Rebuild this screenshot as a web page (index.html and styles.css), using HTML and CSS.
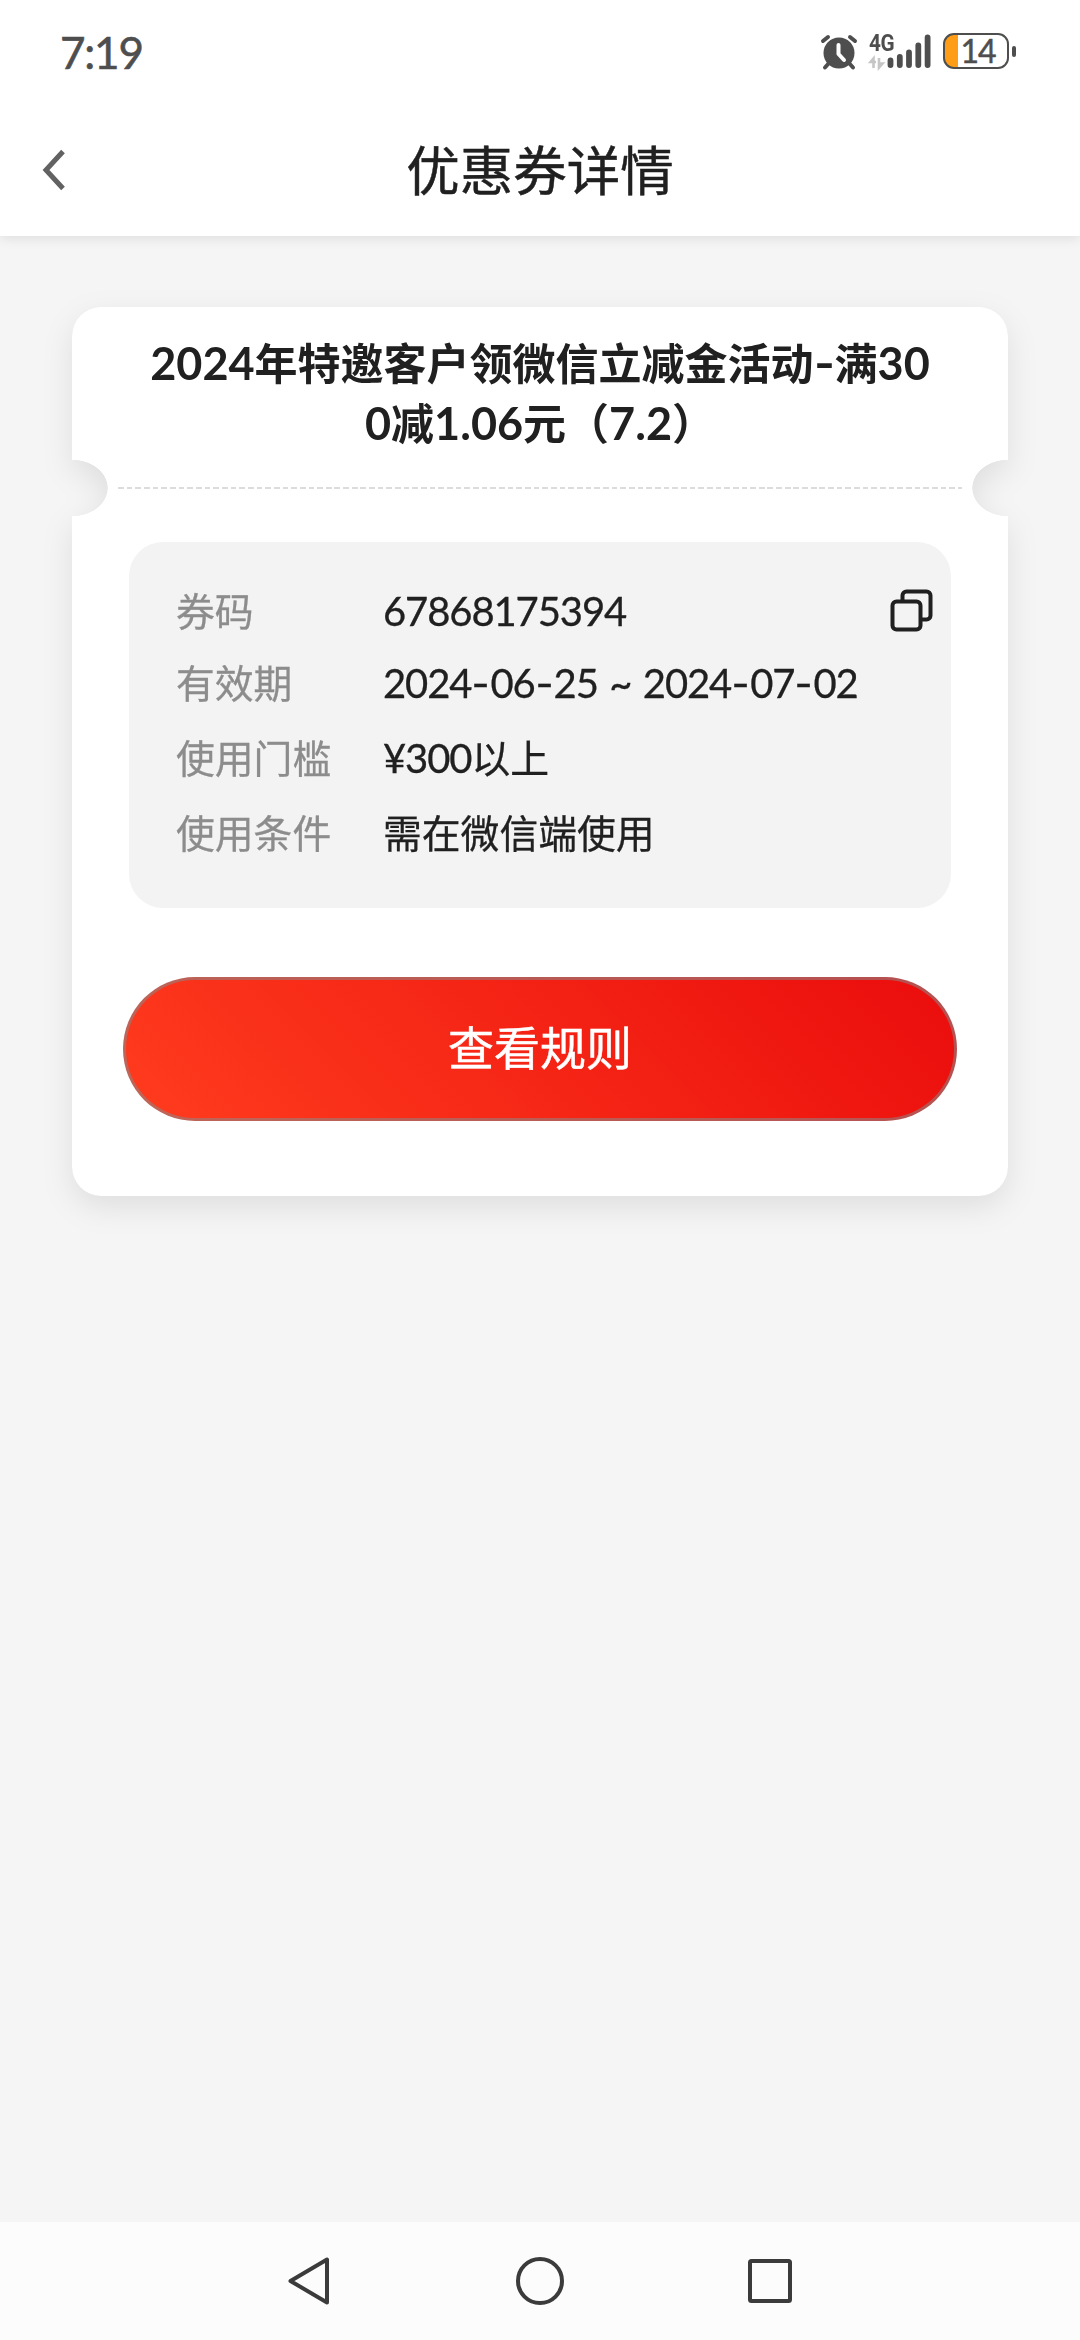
FILE: index.html
```html
<!DOCTYPE html>
<html lang="zh-CN">
<head>
<meta charset="utf-8">
<title>优惠券详情</title>
<link rel="stylesheet" href="styles.css">
</head>
<body>
<div class="screen">
  <div class="status-bar">
    <span class="clock">7:19</span>
    <div class="status-icons">
      <svg class="alarm" width="38" height="38" viewBox="0 0 38 38">
        <g stroke="#4e4e4e" stroke-width="4" stroke-linecap="round" fill="none">
          <path d="M3 8 L8 4M30 4 L35 8M9 30 L5 34.500M29 30 L33 34.500"/>
        </g>
        <circle cx="19" cy="20" r="15.500" fill="#4e4e4e"/>
        <path d="M18.500 12V21L24 27" fill="none" stroke="#fff" stroke-width="4" stroke-linecap="round" stroke-linejoin="round"/>
      </svg>
      <div class="signal">
        <span class="network">4G</span>
        <svg width="64" height="38" viewBox="0 0 64 38">
          <g stroke="#4e4e4e" stroke-width="5.800" stroke-linecap="round">
            <path d="M22.500 27.500V32M31.800 24V32M41 19.500V32M50.300 12.500V32M59.600 4.500V32"/>
          </g>
          <path d="M5.500 35V25.500L2.500 29H8M11 25V34.500L14.500 30.500H10" fill="none" stroke="#c6c6c6" stroke-width="2.600"/>
        </svg>
      </div>
      <div class="battery"><span class="level">14</span></div>
      <span class="nub"></span>
    </div>
  </div>

  <header class="header">
    <svg class="back" width="30" height="44" viewBox="0 0 30 44">
      <path d="M22 3.500 L5 22 L22 40.500" fill="none" stroke="#626262" stroke-width="5"/>
    </svg>
    <h1 class="page-title">优惠券详情</h1>
  </header>

  <main class="content">
    <div class="coupon-shadow">
      <section class="coupon">
        <div class="coupon-head">
          <h2 class="coupon-title"><span class="n">2024</span>年特邀客户领微信立减金活动<span class="n dash">-</span>满<span class="n">30</span><br><span class="n">0</span>减<span class="n">1.06</span>元（<span class="n">7.2</span>）</h2>
        </div>
        <div class="divider"></div>
        <div class="info">
          <div class="row first">
            <span class="label">券码</span>
            <span class="value"><span class="n">67868175394</span></span>
            <svg class="copy" width="44" height="44" viewBox="0 0 44 44">
              <g fill="none" stroke="#202020" stroke-width="4" stroke-linejoin="round">
                <path d="M12.500 12V6.500A4 4 0 0 1 16.500 2.500H36.500A4 4 0 0 1 40.500 6.500V26.500A4 4 0 0 1 36.500 30.500H31"/>
                <rect x="2.500" y="12.500" width="28" height="28" rx="4"/>
              </g>
            </svg>
          </div>
          <div class="row">
            <span class="label">有效期</span>
            <span class="value"><span class="n">2024<span class="dash">-</span>06<span class="dash">-</span>25<span class="tilde">~</span>2024<span class="dash">-</span>07<span class="dash">-</span>02</span></span>
          </div>
          <div class="row">
            <span class="label">使用门槛</span>
            <span class="value"><span class="n">¥300</span>以上</span>
          </div>
          <div class="row">
            <span class="label">使用条件</span>
            <span class="value">需在微信端使用</span>
          </div>
        </div>
        <button class="rules">查看规则</button>
      </section>
    </div>
  </main>

  <nav class="nav-bar">
    <svg width="54" height="54" viewBox="0 0 54 54"><path d="M43 5.500V48.500L6.500 27Z"/></svg>
    <svg width="54" height="54" viewBox="0 0 54 54"><circle cx="27" cy="27" r="22"/></svg>
    <svg width="54" height="54" viewBox="0 0 54 54"><rect x="8" y="7" width="40" height="40" rx="1.500"/></svg>
  </nav>
</div>
</body>
</html>
```
FILE: styles.css
```css
* { box-sizing: border-box; }

body {
  margin: 0;
  font-family: "Lato", "Noto Sans CJK SC", sans-serif;
  color: #202020;
}

.screen {
  width: 1080px;
  height: 2340px;
  display: flex;
  flex-direction: column;
  background: #f5f5f5;
}

.status-bar {
  position: relative;
  z-index: 1;
  height: 104px;
  padding: 0 64px 0 60px;
  display: flex;
  justify-content: space-between;
  background: #fff;
}

.clock {
  padding-top: 25px;
  font-size: 44px;
  line-height: 54px;
  letter-spacing: -1.2px;
  color: #4e4e4e;
  -webkit-text-stroke: 0.6px #4e4e4e;
}

.status-icons {
  display: flex;
  align-items: flex-start;
  padding-top: 33px;
}

.signal {
  position: relative;
  width: 64px;
  height: 38px;
  margin-left: 10px;
}

.network {
  position: absolute;
  left: 1px;
  top: -1px;
  font: bold 23px/24px "Roboto", sans-serif;
  letter-spacing: -0.5px;
  color: #4e4e4e;
  transform: scaleX(0.9);
  transform-origin: left;
}

.battery {
  width: 66px;
  height: 36px;
  margin-left: 11px;
  border: 2.5px solid #4e4e4e;
  border-radius: 11px;
  background: linear-gradient(90deg, #ff9d16 13px, #fff 13px);
  display: flex;
  justify-content: center;
  padding-left: 4px;
}

.level {
  font-size: 32px;
  line-height: 31px;
  letter-spacing: -1px;
  color: #4e4e4e;
  -webkit-text-stroke: 0.5px #4e4e4e;
}

.nub {
  width: 4px;
  height: 11px;
  margin: 13px 0 0 3px;
  border-radius: 2px;
  background: #4e4e4e;
}

.header {
  height: 132px;
  display: grid;
  grid-template-columns: 120px 1fr 120px;
  align-items: center;
  background: #fff;
  box-shadow: 0 2px 12px rgba(0, 0, 0, 0.1);
}

.back { margin-left: 41px; }

.page-title {
  margin: 0;
  font-size: 53.5px;
  line-height: 80px;
  font-weight: 400;
  text-align: center;
  -webkit-text-stroke: 0.5px #202020;
}

.content {
  flex: 1;
  padding: 71px 72px 0;
}

.coupon-shadow { filter: drop-shadow(0 11px 15px rgba(0, 0, 0, 0.09)); }

.coupon {
  height: 889px;
  border-radius: 29px;
  background: #fff;
  display: flex;
  flex-direction: column;
  align-items: center;
  -webkit-mask-image:
    radial-gradient(ellipse 36px 28.5px at 0 181px, transparent 98%, #000 100%),
    radial-gradient(ellipse 36px 28.5px at 100% 181px, transparent 98%, #000 100%);
  mask-image:
    radial-gradient(ellipse 36px 28.5px at 0 181px, transparent 98%, #000 100%),
    radial-gradient(ellipse 36px 28.5px at 100% 181px, transparent 98%, #000 100%);
  mask-composite: intersect;
}

.coupon-head {
  height: 180px;
  padding-top: 27px;
}

.coupon-title {
  margin: 0;
  font-size: 43px;
  line-height: 60px;
  font-weight: 700;
  text-align: center;
  white-space: nowrap;
}

.n { line-height: 1; }

.coupon-title .n { font-size: 45px; }

.dash {
  display: inline-block;
  width: 19px;
  line-height: 1;
  text-align: center;
  letter-spacing: 0;
  transform: scaleX(1.25);
}

.coupon-title .dash { width: 21px; }

.divider {
  width: 844px;
  height: 2px;
  background: repeating-linear-gradient(90deg, #dcdcdc 0 5.7px, transparent 5.7px 8.66px);
}

.info {
  width: 822px;
  height: 366px;
  margin-top: 53px;
  padding: 34px 17px 0 47px;
  border-radius: 34px;
  background: #f3f3f3;
}

.row {
  height: 75px;
  display: flex;
  align-items: center;
  font-size: 38.8px;
  line-height: 60px;
}

.row.first {
  height: 69px;
}

.label {
  width: 207px;
  color: #8c8c8c;
  -webkit-text-stroke: 0.3px #8c8c8c;
}

.value {
  flex: 1;
  -webkit-text-stroke: 0.3px #202020;
}

.value .n {
  font-size: 40px;
  letter-spacing: -1.1px;
}

.value .dash { letter-spacing: 0; }

.tilde {
  display: inline-block;
  width: 45px;
  line-height: 1;
  text-align: center;
}

.rules {
  width: 834px;
  height: 144px;
  margin-top: 69px;
  padding: 0 0 9px;
  border: 3px solid rgba(136, 136, 136, 0.55);
  border-radius: 72px;
  background: linear-gradient(45deg, #ff3c1e, #ea0c0c) border-box;
  color: #fff;
  font: 400 46px/60px "Noto Sans CJK SC", sans-serif;
  -webkit-text-stroke: 0.5px #fff;
}

.nav-bar {
  height: 118px;
  padding: 0 284px;
  display: flex;
  align-items: center;
  justify-content: space-between;
  background: #fcfcfc;
}

.nav-bar svg {
  fill: none;
  stroke: #3b3b3b;
  stroke-width: 4;
  stroke-linejoin: round;
}
```
